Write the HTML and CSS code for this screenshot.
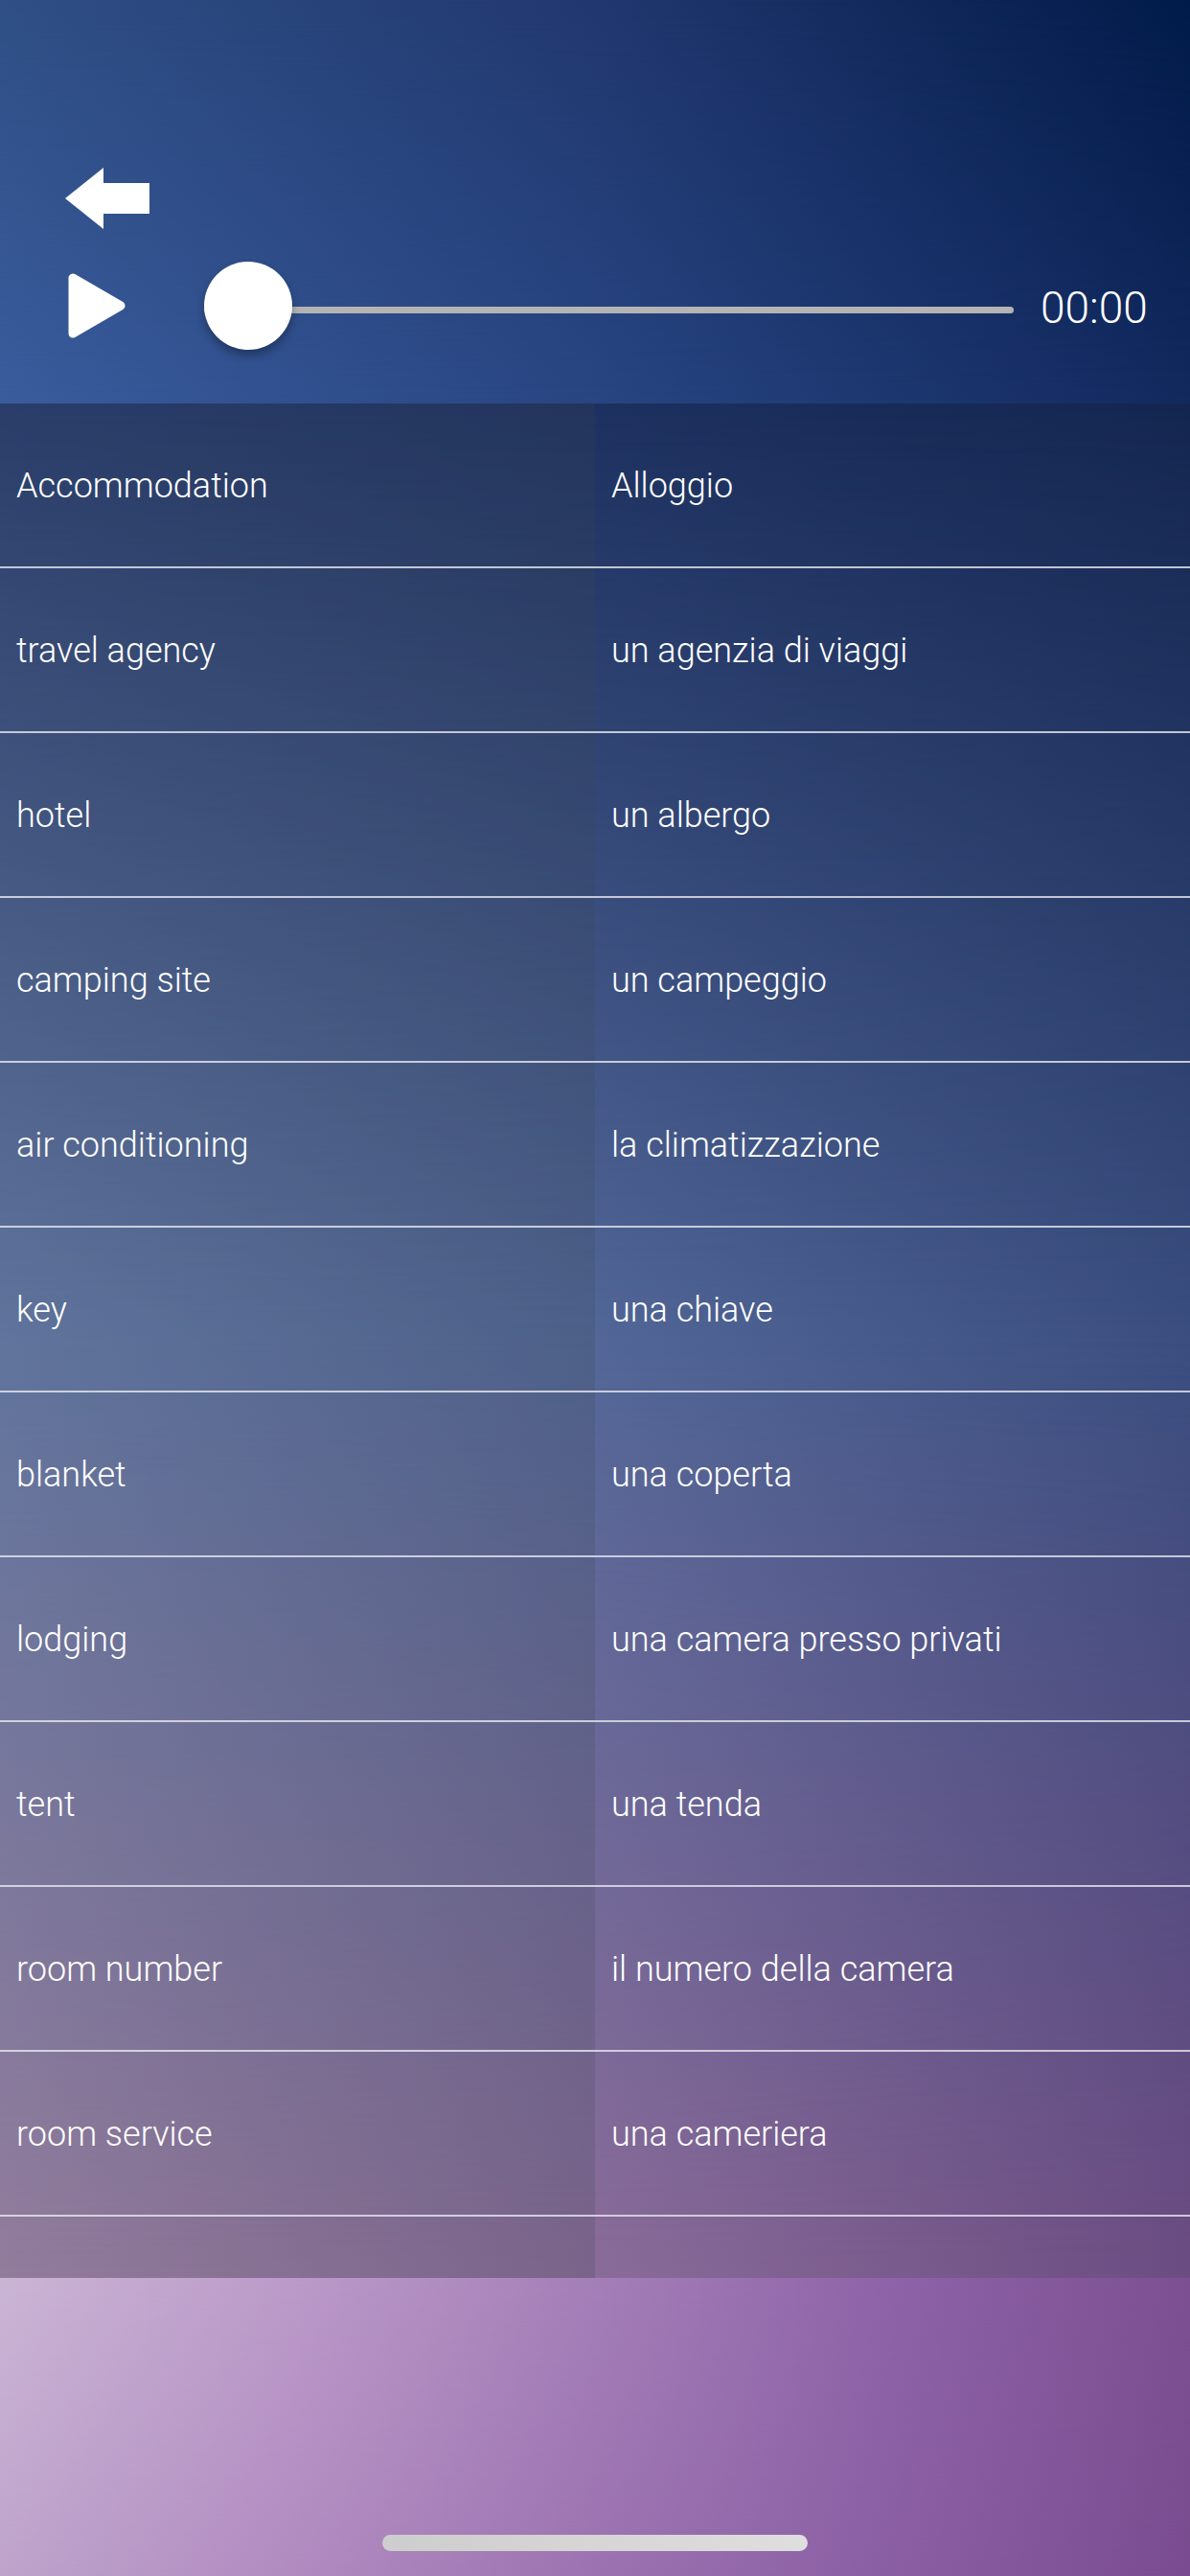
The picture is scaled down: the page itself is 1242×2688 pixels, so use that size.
FILE: index.html
```html
<!DOCTYPE html>
<html lang="it">
<head>
<meta charset="utf-8">
<title>Accommodation</title>
<link rel="stylesheet" href="styles.css">
</head>
<body>
<header class="top">
  <svg class="back" viewBox="0 0 89 64" aria-label="Back"><path d="M1 32 L41 0 V16 H89 V48 H41 V64 Z" fill="#fff"/></svg>
  <div class="player">
    <svg class="play" viewBox="0 0 60 68" aria-label="Play"><path d="M5 5 L5 63 L55 34 Z" fill="#fff" stroke="#fff" stroke-width="9" stroke-linejoin="round"/></svg>
    <div class="slider">
      <div class="track"></div>
      <div class="thumb"></div>
    </div>
    <span class="time">00:00</span>
  </div>
</header>
<main class="list">
  <div class="row"><div class="cell en">Accommodation</div><div class="cell it">Alloggio</div></div>
  <div class="row"><div class="cell en">travel agency</div><div class="cell it">un agenzia di viaggi</div></div>
  <div class="row"><div class="cell en">hotel</div><div class="cell it">un albergo</div></div>
  <div class="row"><div class="cell en">camping site</div><div class="cell it">un campeggio</div></div>
  <div class="row"><div class="cell en">air conditioning</div><div class="cell it">la climatizzazione</div></div>
  <div class="row"><div class="cell en">key</div><div class="cell it">una chiave</div></div>
  <div class="row"><div class="cell en">blanket</div><div class="cell it">una coperta</div></div>
  <div class="row"><div class="cell en">lodging</div><div class="cell it">una camera presso privati</div></div>
  <div class="row"><div class="cell en">tent</div><div class="cell it">una tenda</div></div>
  <div class="row"><div class="cell en">room number</div><div class="cell it">il numero della camera</div></div>
  <div class="row"><div class="cell en">room service</div><div class="cell it">una cameriera</div></div>
  <div class="row"><div class="cell en"></div><div class="cell it"></div></div>
</main>
<footer class="bottom">
  <div class="home-indicator"></div>
</footer>
</body>
</html>
```
FILE: styles.css
```css
* { box-sizing: border-box; margin: 0; padding: 0; }

html, body {
  width: 1242px;
  height: 2688px;
  overflow: hidden;
}

body {
  font-family: Roboto, "Liberation Sans", sans-serif;
  font-weight: 300;
  color: #fff;
  display: flex;
  flex-direction: column;
  background: #7c5092;
}

/* ---------- header ---------- */
.top {
  position: relative;
  isolation: isolate;
  height: 421px;
  flex: none;
  padding: 175px 0 56px;
  display: flex;
  flex-direction: column;
  gap: 34px;
  background: linear-gradient(to right, #2f4f86 0%, #21386f 50%, #011b49 100%);
}
.top::before {
  content: "";
  position: absolute;
  inset: 0;
  z-index: -1;
  background: linear-gradient(to right, #3a5c9c 0%, #284582 50%, #12295e 100%);
  -webkit-mask-image: linear-gradient(to bottom, transparent, #000);
  mask-image: linear-gradient(to bottom, transparent, #000);
}

.back {
  display: block;
  margin-left: 67px;
  width: 89px;
  height: 64px;
}

.player {
  display: flex;
  align-items: center;
  height: 92px;
}

.play {
  flex: none;
  margin-left: 71px;
  width: 60px;
  height: 68px;
}

.slider {
  position: relative;
  flex: none;
  margin-left: 82px;
  width: 845px;
  height: 92px;
  display: flex;
  align-items: center;
}

.track {
  width: 100%;
  height: 7px;
  margin-top: 8px;
  border-radius: 4px;
  background: #b4b4b4;
}

.thumb {
  position: absolute;
  left: 0;
  top: 0;
  width: 92px;
  height: 92px;
  border-radius: 50%;
  background: #fff;
  box-shadow: 0 6px 10px rgba(0, 0, 0, 0.3);
}

.time {
  margin-left: 28px;
  margin-top: 4px;
  font-size: 46px;
  line-height: 1;
  font-weight: 300;
}

/* ---------- list ---------- */
.list {
  position: relative;
  isolation: isolate;
  flex: none;
  height: 1956px;
  overflow: hidden;
  background: linear-gradient(to right, #263c70 0%, #142650 100%);
}
.list::before,
.list::after {
  content: "";
  position: absolute;
  inset: 0;
  z-index: -1;
}
.list::before {
  background: linear-gradient(to right, #6a80b0 0%, #3a4e7f 100%);
  -webkit-mask-image: linear-gradient(to bottom, transparent 0%, #000 50%);
  mask-image: linear-gradient(to bottom, transparent 0%, #000 50%);
}
.list::after {
  background: linear-gradient(to right, #a98aaf 0%, #6c4c82 100%);
  -webkit-mask-image: linear-gradient(to bottom, transparent 50%, #000 100%);
  mask-image: linear-gradient(to bottom, transparent 50%, #000 100%);
}

.row {
  display: grid;
  grid-template-columns: 621px 621px;
  height: 172px;
  flex: none;
  border-bottom: 2px solid rgba(222, 222, 232, 0.85);
}

.cell {
  display: flex;
  align-items: center;
  padding: 3px 17px 0;
  font-size: 36px;
  line-height: 1.2;
  white-space: nowrap;
}

.cell.en {
  background: rgba(60, 70, 80, 0.2);
}

/* ---------- footer ---------- */
.bottom {
  position: relative;
  isolation: isolate;
  flex: 1;
  display: flex;
  align-items: flex-end;
  justify-content: center;
  padding-bottom: 26px;
  background: linear-gradient(to right, #cbb5d5 0%, #bb9ac9 25%, #a47fb8 50%, #8e63a8 75%, #7c5092 100%);
}
.bottom::before {
  content: "";
  position: absolute;
  inset: 0;
  z-index: -1;
  background: linear-gradient(to right, #bea3cb 0%, #b08ac0 25%, #9c72b0 50%, #8a5ea3 75%, #7a4b90 100%);
  -webkit-mask-image: linear-gradient(to bottom, transparent, #000);
  mask-image: linear-gradient(to bottom, transparent, #000);
}

.home-indicator {
  width: 444px;
  height: 17px;
  border-radius: 9px;
  background: linear-gradient(to right, #cdcdcd, #dedede);
}
```
